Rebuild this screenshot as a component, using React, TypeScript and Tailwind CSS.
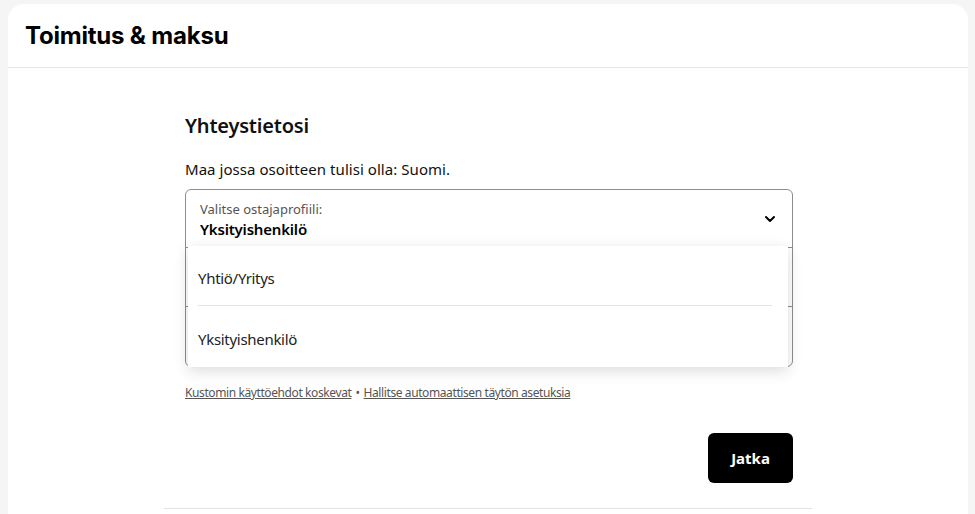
import { ChevronDown } from 'lucide-react';

const sans = { fontFamily: '"Noto Sans", "Open Sans", sans-serif' };

export default function App() {
  return (
    <div className="min-h-screen bg-[#f5f5f5] pl-2 pr-[7px] pt-1 overflow-hidden">
      <div className="bg-white rounded-t-2xl min-h-[520px]">
        <div className="h-16 flex items-center px-[17px] border-b border-[#e5e5e8]">
          <h1 className="text-[24px] font-bold text-black tracking-[-0.2px]" style={{ fontFamily: 'Inter, sans-serif' }}>
            Toimitus &amp; maksu
          </h1>
        </div>

        <div className="w-[648px] mx-auto border-b border-[#e2e2e2] pl-[21px] pr-[19px] pt-[44px] pb-[25px]" style={sans}>
          <h2 className="text-[20px] font-semibold text-[#111] leading-7 tracking-[-0.2px]">Yhteystietosi</h2>
          <p className="mt-[17px] text-[15px] text-[#111] leading-6 tracking-[0.05px]">
            Maa jossa osoitteen tulisi olla: Suomi.
          </p>

          <div className="relative mt-[8px]">
            <div className="rounded-md border border-[#8d8d8d] flex flex-col">
              <div className="h-[58px] flex items-center justify-between pl-[14px] pr-[14px] border-b border-[#8d8d8d]">
                <div className="flex flex-col pt-[2px]">
                  <span className="text-[13px] leading-[19px] text-[#555]">Valitse ostajaprofiili:</span>
                  <span className="text-[15px] leading-[21px] font-semibold text-black tracking-[-0.2px]">Yksityishenkilö</span>
                </div>
                <ChevronDown className="w-4 h-4 text-black" strokeWidth={3} />
              </div>
              <div className="h-[59px] border-b border-[#8d8d8d]" />
              <div className="h-[59px]" />
            </div>

            {/* open dropdown menu over the fields */}
            <div className="absolute left-[3px] right-[5px] top-[57px] bg-white shadow-[0_4px_14px_rgba(0,0,0,0.14)] flex flex-col px-[10px] tracking-[-0.3px]">
              <div className="h-[60px] flex items-center pt-[5px] border-b border-[#e4e4e4] mr-[6px] text-[15px] text-[#222]">
                Yhtiö/Yritys
              </div>
              <div className="h-[61px] flex items-center pt-[5px] text-[15px] text-[#222]">Yksityishenkilö</div>
            </div>
          </div>

          <div className="mt-[17px] text-[12px] text-[#555] tracking-[-0.4px] flex items-center gap-1">
            <a className="underline">Kustomin käyttöehdot koskevat</a>
            <span>•</span>
            <a className="underline">Hallitse automaattisen täytön asetuksia</a>
          </div>

          <div className="mt-[31px] flex justify-end">
            <button className="w-[85px] h-[50px] rounded-md bg-black text-white text-[15px] font-bold">Jatka</button>
          </div>
        </div>
      </div>
    </div>
  );
}
